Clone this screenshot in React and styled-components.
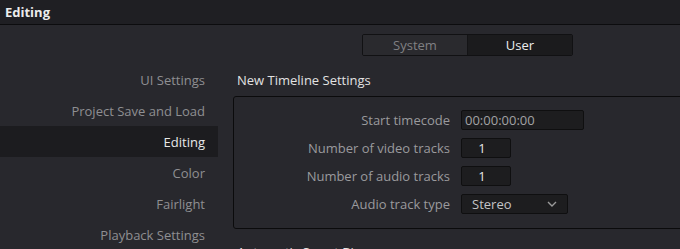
import React from 'react'
import styled, { createGlobalStyle } from 'styled-components'

const GlobalStyle = createGlobalStyle`
  html, body {
    margin: 0;
    padding: 0;
    background: #28282d;
    overflow: hidden;
  }
  body {
    font-family: 'Open Sans', 'Noto Sans', sans-serif;
    font-size: 13px;
  }
`

const sections = [
  'UI Settings',
  'Project Save and Load',
  'Editing',
  'Color',
  'Fairlight',
  'Playback Settings'
]

const Chevron = () => (
  <svg width="10" height="6" viewBox="0 0 10 6">
    <path d="M1 1 L5 5 L9 1" fill="none" stroke="#9a9a9a" strokeWidth="1.4" />
  </svg>
)

const App = () => (
  <Page>
    <GlobalStyle />
    <Header>Editing</Header>
    <Toolbar>
      <Segmented>
        <Segment>System</Segment>
        <Segment active>User</Segment>
      </Segmented>
    </Toolbar>
    <Body>
      <Sidebar>
        {sections.map(s => (
          <NavItem key={s} active={s === 'Editing'}>
            {s}
          </NavItem>
        ))}
      </Sidebar>
      <Main>
        <SectionTitle>New Timeline Settings</SectionTitle>
        <Panel>
          <Label>Start timecode</Label>
          <Field wide>00:00:00:00</Field>
          <Label>Number of video tracks</Label>
          <NumField>1</NumField>
          <Label>Number of audio tracks</Label>
          <NumField>1</NumField>
          <Label>Audio track type</Label>
          <Select>
            Stereo
            <Chevron />
          </Select>
        </Panel>
        <SectionTitle>Automatic Smart Bins</SectionTitle>
      </Main>
    </Body>
  </Page>
)

const Page = styled.div`
  width: 680px;
  height: 249px;
  overflow: hidden;
  background: #28282d;
`

const Header = styled.div`
  height: 24px;
  display: flex;
  align-items: center;
  padding-left: 5px;
  background: #1f1f23;
  border-bottom: 1px solid #0c0c0e;
  color: #ececec;
  font-weight: 700;
  font-size: 13px;
`

const Toolbar = styled.div`
  display: flex;
  padding: 9px 0 0 362px;
  height: 22px;
`

const Segmented = styled.div`
  display: flex;
  width: 211px;
  height: 22px;
  border: 1px solid #111113;
  border-radius: 2px;
  box-sizing: border-box;
  overflow: hidden;
`

const Segment = styled.div`
  flex: 1;
  display: flex;
  align-items: center;
  justify-content: center;
  background: ${p => (p.active ? '#1b1b1d' : '#2a2a2e')};
  color: ${p => (p.active ? '#ededed' : '#808083')};
  border-left: ${p => (p.active ? '1px solid #141416' : 'none')};
`

const Body = styled.div`
  display: flex;
  padding-top: 8px;
`

const Sidebar = styled.div`
  width: 218px;
  flex-shrink: 0;
  display: flex;
  flex-direction: column;
`

const NavItem = styled.div`
  height: 31px;
  display: flex;
  align-items: center;
  justify-content: flex-end;
  padding-right: 13px;
  background: ${p => (p.active ? '#1c1c1f' : 'transparent')};
  color: ${p => (p.active ? '#e8e8e8' : '#8f8f92')};
`

const Main = styled.div`
  display: flex;
  flex-direction: column;
  padding-left: 15px;
`

const SectionTitle = styled.div`
  height: 31px;
  display: flex;
  align-items: center;
  padding-left: 4px;
  color: #e2e2e2;
  font-size: 13px;
`

const Panel = styled.div`
  width: 480px;
  margin: 1px 0 7px;
  border: 1px solid #0b0b0c;
  border-radius: 3px;
  padding: 9px 0 10px;
  display: grid;
  grid-template-columns: 216px auto;
  grid-auto-rows: 28px;
  column-gap: 11px;
  align-items: center;
  justify-items: start;
`

const Label = styled.div`
  justify-self: end;
  color: #9a9a9d;
`

const Field = styled.div`
  box-sizing: border-box;
  width: ${p => (p.wide ? '123px' : '50px')};
  height: 20px;
  display: flex;
  align-items: center;
  padding-left: 3px;
  background: #1d1d1f;
  border: 1px solid #0f0f10;
  border-radius: 2px;
  color: #a2a2a4;
`

const NumField = styled(Field)`
  padding-left: 0;
  justify-content: center;
  color: #e8e8e8;
  padding-right: 8px;
`

const Select = styled(Field)`
  width: 107px;
  padding: 0 10px 0 10px;
  justify-content: space-between;
  color: #c4c4c6;
`

export default App
